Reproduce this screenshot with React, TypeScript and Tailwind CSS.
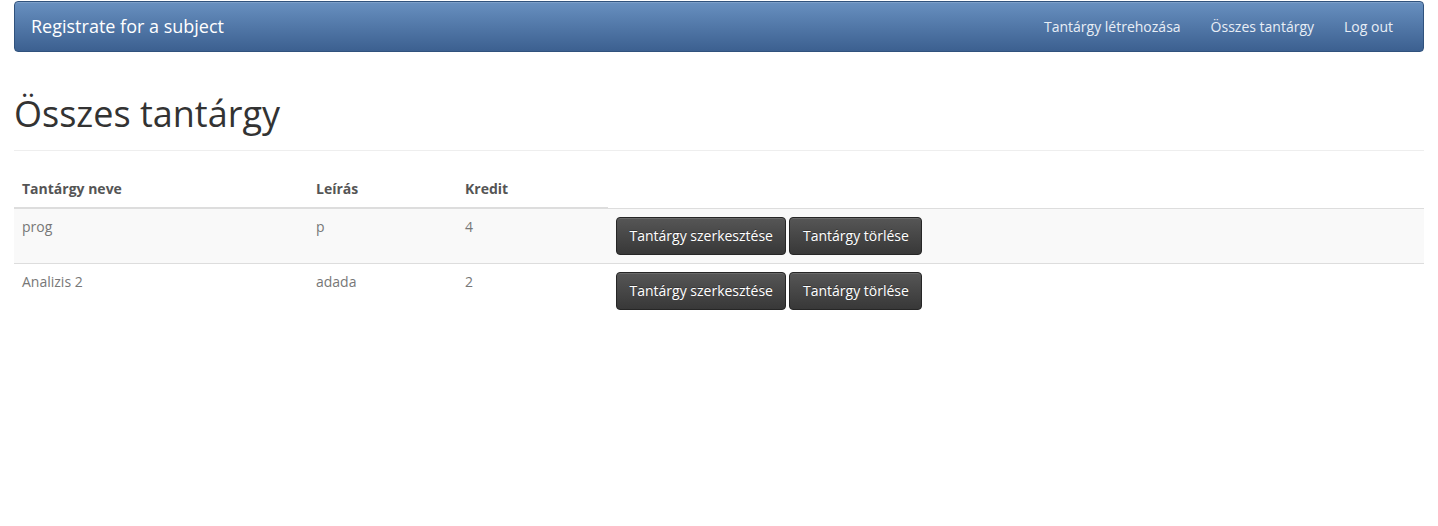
import React from 'react';

const subjects = [
  { name: 'prog', description: 'p', credit: 4 },
  { name: 'Analizis 2', description: 'adada', credit: 2 },
];

function Navbar() {
  return (
    <nav className="mx-[14px] mt-[1px] flex h-[51px] items-center justify-between rounded-[4px] border border-[#30527d] bg-gradient-to-b from-[#6890c0] to-[#3c6090] shadow-[inset_0_1px_0_rgba(255,255,255,0.15)]">
      <a href="#" className="pl-[16px] text-[18px] text-white">Registrate for a subject</a>
      <ul className="flex pr-[15px] text-[14px] text-[#e8eef6]">
        <li><a href="#" className="px-[15px]">Tantárgy létrehozása</a></li>
        <li><a href="#" className="px-[15px]">Összes tantárgy</a></li>
        <li><a href="#" className="px-[15px]">Log out</a></li>
      </ul>
    </nav>
  );
}

function DarkButton({ children }: { children: React.ReactNode }) {
  return (
    <button className="h-[38px] rounded-[4px] border border-[#262626] bg-gradient-to-b from-[#565656] to-[#383838] px-[12.5px] text-[14px] leading-[20px] text-white shadow-[inset_0_1px_0_rgba(255,255,255,0.12)] [text-shadow:0_-1px_0_rgba(0,0,0,0.3)]">
      {children}
    </button>
  );
}

export default function App() {
  return (
    <div className="min-h-screen bg-white font-['Open_Sans',sans-serif] text-[14px] text-[#333]">
      <Navbar />
      <div className="mx-[14px]">
        <div className="mt-[42px] border-b border-[#eee] pb-[16px]">
          <h1 className="text-[36px] leading-[40px] text-[#333]">Összes tantárgy</h1>
        </div>
        <table className="mt-[20px] w-full border-collapse text-left">
          <thead>
            <tr>
              <th className="w-[294px] border-b-2 border-[#ddd] p-[8px] font-bold leading-[20px] text-[#555]">Tantárgy neve</th>
              <th className="w-[149px] border-b-2 border-[#ddd] p-[8px] font-bold leading-[20px] text-[#555]">Leírás</th>
              <th className="w-[151px] border-b-2 border-[#ddd] p-[8px] font-bold leading-[20px] text-[#555]">Kredit</th>
            </tr>
          </thead>
          <tbody>
            {subjects.map((s, i) => (
              <tr key={s.name} className={i % 2 === 0 ? 'bg-[#f9f9f9]' : 'bg-white'}>
                <td className="border-t border-[#ddd] p-[8px] align-top leading-[20px] text-[#777]">{s.name}</td>
                <td className="border-t border-[#ddd] p-[8px] align-top leading-[20px] text-[#777]">{s.description}</td>
                <td className="border-t border-[#ddd] p-[8px] align-top leading-[20px] text-[#777]">{s.credit}</td>
                <td className="border-t border-[#ddd] p-[8px] align-top">
                  <div className="flex gap-[3px]">
                    <DarkButton>Tantárgy szerkesztése</DarkButton>
                    <DarkButton>Tantárgy törlése</DarkButton>
                  </div>
                </td>
              </tr>
            ))}
          </tbody>
        </table>
      </div>
    </div>
  );
}
